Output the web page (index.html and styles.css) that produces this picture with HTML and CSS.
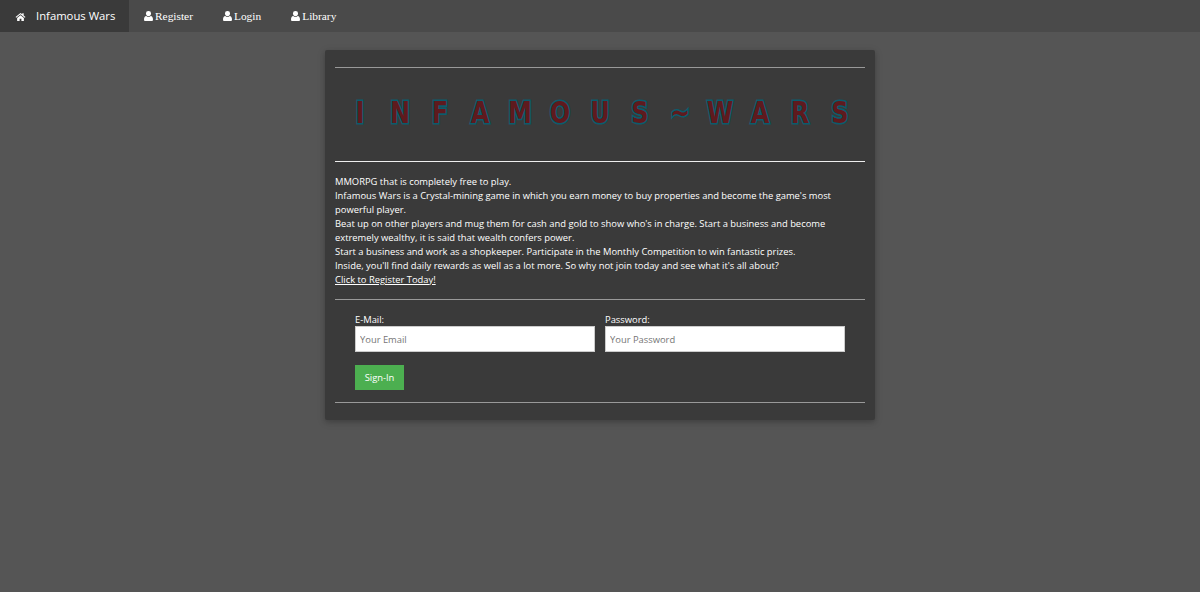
FILE: index.html
```html
<!DOCTYPE html>
<html lang="en">
<head>
    <meta charset="UTF-8">
    <meta name="viewport" content="width=device-width, initial-scale=1.0">
    <title>Infamous Wars</title>
    <link rel="stylesheet" href="styles.css">
</head>
<body>
    <nav class="topbar">
        <a class="brand" href="#">
            <svg class="icon-home" viewBox="0 0 24 20"><path d="M12 2 1 11l1.500 1.800L12 5l9.500 7.800L23 11l-4-3.300V3h-3v2.200zM4.500 13.500V20h5.500v-5h4v5h5.500v-6.500L12 7.300z"/></svg>
            <span>Infamous Wars</span>
        </a>
        <a class="nav-link" href="#"><svg class="icon-user" viewBox="0 0 16 18"><path d="M8 0a4.500 4.500 0 0 0-4.500 5c0 2.500 2 4.500 4.500 4.500s4.500-2 4.500-4.500A4.500 4.500 0 0 0 8 0zM4 9c-2.500.5-4 2.500-4 5.500V16c0 1 1 2 2 2h12c1 0 2-1 2-2v-1.500C16 11.500 14.500 9.500 12 9c-1 1-2.400 1.600-4 1.600S5 10 4 9z"/></svg>Register</a>
        <a class="nav-link" href="#"><svg class="icon-user" viewBox="0 0 16 18"><path d="M8 0a4.500 4.500 0 0 0-4.500 5c0 2.500 2 4.500 4.500 4.500s4.500-2 4.500-4.500A4.500 4.500 0 0 0 8 0zM4 9c-2.500.5-4 2.500-4 5.500V16c0 1 1 2 2 2h12c1 0 2-1 2-2v-1.500C16 11.500 14.500 9.500 12 9c-1 1-2.400 1.600-4 1.600S5 10 4 9z"/></svg>Login</a>
        <a class="nav-link" href="#"><svg class="icon-user" viewBox="0 0 16 18"><path d="M8 0a4.500 4.500 0 0 0-4.500 5c0 2.500 2 4.500 4.500 4.500s4.500-2 4.500-4.500A4.500 4.500 0 0 0 8 0zM4 9c-2.500.5-4 2.500-4 5.500V16c0 1 1 2 2 2h12c1 0 2-1 2-2v-1.500C16 11.500 14.500 9.500 12 9c-1 1-2.400 1.600-4 1.600S5 10 4 9z"/></svg>Library</a>
    </nav>

    <main class="card">
        <hr class="rule rule-first">
        <div class="logo">
            <span>I</span><span>N</span><span>F</span><span>A</span><span>M</span><span>O</span><span>U</span><span>S</span><span>~</span><span>W</span><span>A</span><span>R</span><span>S</span>
        </div>
        <hr class="rule rule-bright">
        <p class="intro">
            MMORPG that is completely free to play.<br>
            Infamous Wars is a Crystal-mining game in which you earn money to buy properties and become the game's most powerful player.<br>
            Beat up on other players and mug them for cash and gold to show who's in charge. Start a business and become extremely wealthy, it is said that wealth confers power.<br>
            Start a business and work as a shopkeeper. Participate in the Monthly Competition to win fantastic prizes.<br>
            Inside, you'll find daily rewards as well as a lot more. So why not join today and see what it's all about?<br>
            <a href="#">Click to Register Today!</a>
        </p>
        <hr class="rule">
        <form class="login">
            <div class="fields">
                <label class="field">E-Mail:<input type="text" placeholder="Your Email"></label>
                <label class="field">Password:<input type="password" placeholder="Your Password"></label>
            </div>
            <button type="button">Sign-In</button>
        </form>
        <hr class="rule">
    </main>
</body>
</html>
```

FILE: styles.css
```css
html, body {
    margin: 0;
    height: 100%;
}

body {
    background: #555;
    color: #fff;
    font-family: 'Open Sans', sans-serif;
    font-size: 9.4px;
    line-height: 14px;
    overflow: hidden;
}

a {
    color: inherit;
}

.topbar {
    display: flex;
    height: 32px;
    background: #4a4a4a;
}

.brand {
    display: flex;
    align-items: center;
    gap: 10px;
    width: 129px;
    box-sizing: border-box;
    padding-left: 15px;
    background: #3a3a3a;
    font-size: 11.3px;
    text-decoration: none;
}

.icon-home {
    width: 11px;
    height: 9px;
    fill: #fff;
}

.nav-link {
    display: flex;
    align-items: center;
    padding: 0 15px;
    font-family: 'Liberation Serif', serif;
    font-size: 11.4px;
    text-decoration: none;
}

.icon-user {
    width: 9px;
    height: 10px;
    margin-right: 2px;
    fill: #fff;
}

.card {
    width: 530px;
    height: 350px;
    margin: 18px auto 0;
    padding: 10px;
    background: #3a3a3a;
    border-radius: 2px;
    box-shadow: 0 2px 5px rgba(0, 0, 0, 0.16), 0 2px 10px rgba(0, 0, 0, 0.12);
}

.rule {
    height: 1px;
    margin: 0;
    border: 0;
    background: #999;
}

.rule-first {
    margin-top: 7px;
}

.rule-bright {
    background: #eee;
}

.logo {
    display: grid;
    grid-template-columns: repeat(13, 40px);
    align-items: center;
    height: 89px;
    margin-left: 5px;
    padding-bottom: 4px;
    font-family: 'DejaVu Sans', sans-serif;
    font-size: 24px;
    font-weight: bold;
    text-align: center;
    color: #5e1a1e;
    -webkit-text-stroke: 2.5px #0b5c6d;
    paint-order: stroke fill;
}

.logo span {
    transform: scaleY(1.25);
}

.intro {
    margin: 13px 0 12px;
}

.login {
    padding: 0 20px;
}

.fields {
    display: flex;
    gap: 10px;
    padding-top: 13px;
}

.field {
    display: block;
    flex: 1;
    line-height: 13px;
}

.field input {
    display: block;
    width: 100%;
    height: 26px;
    box-sizing: border-box;
    padding: 0 4px;
    border: 1px solid #ccc;
    border-radius: 0;
    background: #fff;
    font-family: inherit;
    font-size: 9.4px;
}

.field input::placeholder {
    color: #757575;
}

button {
    display: block;
    width: 49px;
    height: 25px;
    margin: 13px 0 12px;
    padding: 0;
    border: 0;
    background: #4caf50;
    color: #fff;
    font-family: inherit;
    font-size: 9.4px;
}
```
